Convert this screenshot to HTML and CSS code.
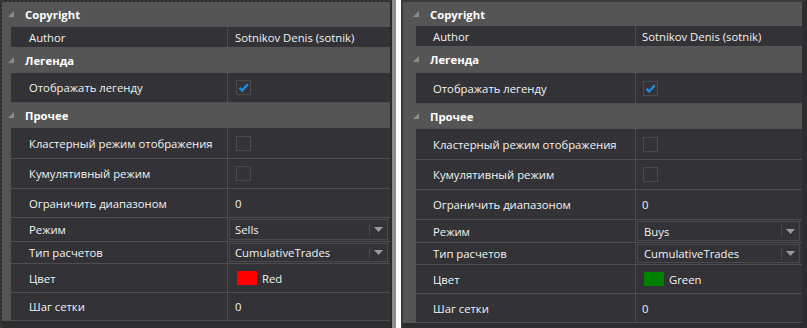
FILE: index.html
```html
<!DOCTYPE html>
<html>
<head>
<meta charset="utf-8">
<link rel="stylesheet" href="styles.css">
</head>
<body>
<div class="wrap">
  <div class="panel left">
    <div class="section">
      <div class="hdr h25"><svg class="tri" width="6" height="6" viewBox="0 0 6 6"><polygon points="6,0 6,6 0,6"/></svg>Copyright</div>
      <div class="rows">
        <div class="row r20"><div class="lbl">Author</div><div class="val">Sotnikov Denis (sotnik)</div></div>
      </div>
    </div>
    <div class="section">
      <div class="hdr h26"><svg class="tri" width="6" height="6" viewBox="0 0 6 6"><polygon points="6,0 6,6 0,6"/></svg>Легенда</div>
      <div class="rows">
        <div class="row r30"><div class="lbl">Отображать легенду</div><div class="val"><span class="cb"><svg width="13" height="13" viewBox="0 0 13 13"><path d="M2.5 6.8 L5.2 9.6 L10.8 3.2" /></svg></span></div></div>
      </div>
    </div>
    <div class="section">
      <div class="hdr h25"><svg class="tri" width="6" height="6" viewBox="0 0 6 6"><polygon points="6,0 6,6 0,6"/></svg>Прочее</div>
      <div class="rows">
        <div class="row r31"><div class="lbl">Кластерный режим отображения</div><div class="val"><span class="cb"></span></div></div>
        <div class="row r30"><div class="lbl">Кумулятивный режим</div><div class="val"><span class="cb"></span></div></div>
        <div class="row r29"><div class="lbl">Ограничить диапазоном</div><div class="val">0</div></div>
        <div class="row r24"><div class="lbl">Режим</div><div class="val dd"><span class="ddtext">Sells</span><span class="ddbtn"><svg width="9" height="5" viewBox="0 0 9 5"><polygon points="0,0 9,0 4.5,5"/></svg></span></div></div>
        <div class="row r22"><div class="lbl">Тип расчетов</div><div class="val dd"><span class="ddtext">CumulativeTrades</span><span class="ddbtn"><svg width="9" height="5" viewBox="0 0 9 5"><polygon points="0,0 9,0 4.5,5"/></svg></span></div></div>
        <div class="row r29"><div class="lbl">Цвет</div><div class="val"><span class="sw red"></span>Red</div></div>
        <div class="row r28 last"><div class="lbl">Шаг сетки</div><div class="val">0</div></div>
      </div>
    </div>
  </div>
  <div class="strip"></div>
  <div class="gap"></div>
  <div class="panel right">
    <div class="section">
      <div class="hdr h24"><svg class="tri" width="6" height="6" viewBox="0 0 6 6"><polygon points="6,0 6,6 0,6"/></svg>Copyright</div>
      <div class="rows">
        <div class="row r20"><div class="lbl">Author</div><div class="val">Sotnikov Denis (sotnik)</div></div>
      </div>
    </div>
    <div class="section">
      <div class="hdr h27"><svg class="tri" width="6" height="6" viewBox="0 0 6 6"><polygon points="6,0 6,6 0,6"/></svg>Легенда</div>
      <div class="rows">
        <div class="row r31"><div class="lbl">Отображать легенду</div><div class="val"><span class="cb"><svg width="13" height="13" viewBox="0 0 13 13"><path d="M2.5 6.8 L5.2 9.6 L10.8 3.2" /></svg></span></div></div>
      </div>
    </div>
    <div class="section">
      <div class="hdr h25"><svg class="tri" width="6" height="6" viewBox="0 0 6 6"><polygon points="6,0 6,6 0,6"/></svg>Прочее</div>
      <div class="rows">
        <div class="row r31"><div class="lbl">Кластерный режим отображения</div><div class="val"><span class="cb"></span></div></div>
        <div class="row r30"><div class="lbl">Кумулятивный режим</div><div class="val"><span class="cb"></span></div></div>
        <div class="row r30"><div class="lbl">Ограничить диапазоном</div><div class="val">0</div></div>
        <div class="row r23"><div class="lbl">Режим</div><div class="val dd"><span class="ddtext">Buys</span><span class="ddbtn"><svg width="9" height="5" viewBox="0 0 9 5"><polygon points="0,0 9,0 4.5,5"/></svg></span></div></div>
        <div class="row r22"><div class="lbl">Тип расчетов</div><div class="val dd"><span class="ddtext">CumulativeTrades</span><span class="ddbtn"><svg width="9" height="5" viewBox="0 0 9 5"><polygon points="0,0 9,0 4.5,5"/></svg></span></div></div>
        <div class="row r29"><div class="lbl">Цвет</div><div class="val"><span class="sw green"></span>Green</div></div>
        <div class="row r29 last"><div class="lbl">Шаг сетки</div><div class="val">0</div></div>
      </div>
    </div>
  </div>
</div>
</body>
</html>
```

FILE: styles.css
```css
html, body {
  margin: 0;
  padding: 0;
  background: #ffffff;
}
body {
  font-family: "Open Sans", "Noto Sans", "Liberation Sans", sans-serif;
  font-size: 11.3px;
  color: #f2f2f2;
}
.wrap {
  display: flex;
  height: 328px;
  overflow: hidden;
}
.panel {
  background: #2d2d30;
  display: flex;
  flex-direction: column;
  height: 328px;
  box-sizing: border-box;
}
.panel.left {
  width: 392px;
  border-top: 2px dotted #3a3a3a;
  border-right: 2px dotted #262626;
  border-left: 2px dotted #3a3a3a;
}
.strip {
  width: 4px;
  background: #8c8c8c;
  height: 328px;
}
.gap {
  width: 5px;
  background: #ffffff;
}
.panel.right {
  width: 406px;
  border-top: 2px solid #3a3a3a;
  border-left: 2px solid #3a3a3a;
  border-right: 5px solid #2d2d30;
}
.section {
  background: #555555;
}
.hdr {
  display: flex;
  align-items: center;
  font-weight: 700;
  color: #ffffff;
}
.left .hdr { padding-left: 6px; }
.right .hdr { padding-left: 10px; }
.tri {
  fill: #8a8a8a;
  margin-right: 11px;
  margin-top: -1px;
}
.h24 { height: 24px; }
.h25 { height: 25px; }
.h26 { height: 26px; }
.h27 { height: 27px; }
.rows {
  margin-left: 9px;
}
.right .rows { margin-left: 13px; }
.row {
  display: grid;
  grid-template-columns: 217px 1fr;
  background: #333337;
  border-bottom: 1px solid #4e4e50;
  box-sizing: border-box;
}
.right .row { grid-template-columns: 220px 1fr; }
.r20 { height: 20px; border-bottom: none; }
.r22 { height: 22px; }
.r23 { height: 23px; }
.r24 { height: 24px; }
.r28 { height: 28px; }
.r29 { height: 29px; }
.r30 { height: 30px; }
.r31 { height: 31px; }
.lbl {
  display: flex;
  align-items: center;
  padding-left: 18px;
  border-right: 1px solid #4a4a4c;
  white-space: nowrap;
}
.right .lbl { padding-left: 17px; }
.val {
  display: flex;
  align-items: center;
  padding-left: 7px;
  white-space: nowrap;
}
.right .val { padding-left: 6px; }
.cb {
  width: 13px;
  height: 13px;
  border: 1px solid #4a4a4c;
  margin-left: 1px;
  display: flex;
  align-items: center;
  justify-content: center;
}
.cb svg path {
  fill: none;
  stroke: #1c8ce0;
  stroke-width: 2.4;
}
.dd {
  margin: 1px 2px 1px 1px;
  border: 1px solid #4a4a4c;
  padding-left: 5px;
  justify-content: space-between;
}
.ddbtn {
  display: flex;
  align-items: center;
  justify-content: center;
  width: 16px;
  height: 12px;
  border-left: 1px solid #4a4a4c;
  margin-right: 1px;
}
.ddbtn svg { fill: #9a9a9a; }
.sw {
  width: 20px;
  height: 14px;
  margin-left: 2px;
  margin-right: 5px;
}
.sw.red { background: #ff0000; }
.sw.green { background: #008000; }
```
